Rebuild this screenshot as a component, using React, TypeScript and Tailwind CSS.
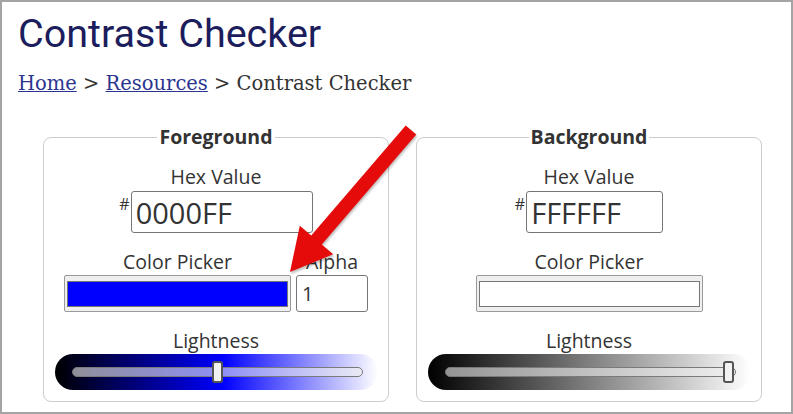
import React from "react";

type PanelProps = {
  title: string;
  hex: string;
  hexWidth: string;
  swatch: string;
  showAlpha: boolean;
  gradient: string;
  thumbLeft: string;
};

function Panel({ title, hex, hexWidth, swatch, showAlpha, gradient, thumbLeft }: PanelProps) {
  return (
    <fieldset className="w-[346px] rounded-lg border border-[#cccccc] pb-[11px]">
      <legend className="mx-auto px-[2px] text-[19.5px] font-bold leading-6 text-[#333]">
        {title}
      </legend>
      <div className="flex flex-col items-center text-[19.5px] leading-6 text-[#333]">
        <div className="mt-[16px]">Hex Value</div>
        <div className="mt-[2px] flex items-start">
          <span className="mr-[1px] mt-[5px] text-[16px] leading-none">#</span>
          <input
            readOnly
            value={hex}
            className={`${hexWidth} h-[42px] rounded-[3px] border border-[#767676] px-1 text-[29px] text-[#333]`}
          />
        </div>

        <div className="mt-[17px] flex items-end gap-[5px]">
          <div className="flex flex-col items-center">
            <div>Color Picker</div>
            <div className="mt-[1px] h-[37px] w-[227px] rounded-[2px] border border-[#9a9a9a] bg-[#efefef] pb-[4px] pl-[2px] pr-[2px] pt-[5px]">
              <div className={`h-full w-full border border-[#777] ${swatch}`} />
            </div>
          </div>
          {showAlpha && (
            <div className="flex flex-col items-center">
              <div>Alpha</div>
              <input
                readOnly
                value="1"
                className="mt-[1px] h-[37px] w-[72px] rounded-[3px] border border-[#767676] px-[5px] text-[20px] text-[#333]"
              />
            </div>
          )}
        </div>

        <div className="mt-[17px]">Lightness</div>
        <div className={`mt-[1px] flex h-[36px] w-[323px] items-center rounded-full pl-[17px] pr-[15px] ${gradient}`}>
          <div className="relative h-[10px] flex-1 rounded-full border border-[#7a7a7a] bg-[#efefef]/60">
            <div
              className={`absolute top-1/2 h-[22px] w-[11px] -translate-y-1/2 rounded-[3px] border-2 border-[#555] bg-[#f2f2f2] ${thumbLeft}`}
            />
          </div>
        </div>
      </div>
    </fieldset>
  );
}

export default function App() {
  return (
    <div className="relative h-[414px] w-[793px] overflow-hidden border-2 border-[#a4a4a4] bg-white font-['Open_Sans',sans-serif]">
      <div className="px-4">
        <h1 className="mt-[9px] font-['Roboto',sans-serif] text-[39.5px] leading-[46px] text-[#1c1d5c]">
          Contrast Checker
        </h1>
        <nav className="mt-[14px] font-['DejaVu_Serif',serif] text-[19.5px] leading-[26px] text-[#333]">
          <a href="#" className="text-[#2b3590] underline">
            Home
          </a>{" "}
          &gt;{" "}
          <a href="#" className="text-[#2b3590] underline">
            Resources
          </a>{" "}
          &gt; Contrast Checker
        </nav>
      </div>

      <div className="ml-[41px] mt-[28px] flex gap-[27px]">
        <Panel
          title="Foreground"
          hex="0000FF"
          hexWidth="w-[182px]"
          swatch="bg-[#0000ff]"
          showAlpha
          gradient="bg-[linear-gradient(to_right,#000000,#0000ff_52%,#ffffff)]"
          thumbLeft="left-[139px]"
        />
        <Panel
          title="Background"
          hex="FFFFFF"
          hexWidth="w-[137px]"
          swatch="bg-white"
          showAlpha={false}
          gradient="bg-[linear-gradient(to_right,#000000,#ffffff)]"
          thumbLeft="left-[277px]"
        />
      </div>

      {/* red pointer arrow drawn over the form */}
      <svg
        className="pointer-events-none absolute -left-[2px] -top-[2px] drop-shadow-[1px_2px_1px_rgba(0,0,0,0.25)]"
        width="793"
        height="414"
        viewBox="0 0 793 414"
      >
        <polygon
          points="405.7,125.5 416.3,134.5 321.8,244.5 333.2,254.3 290,272 299.8,225.7 311.2,235.5"
          fill="#e60b0b"
        />
      </svg>
    </div>
  );
}
